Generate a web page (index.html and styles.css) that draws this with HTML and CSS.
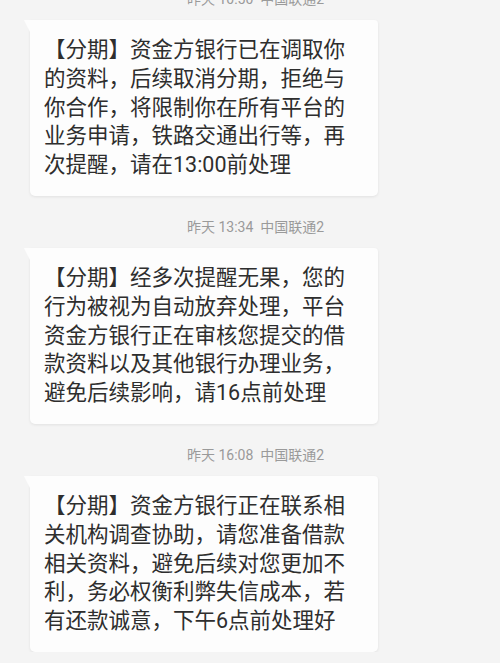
FILE: index.html
```html
<!DOCTYPE html>
<html lang="zh-CN">

<head>
    <meta charset="UTF-8">
    <meta name="viewport" content="width=device-width, initial-scale=1.0">
    <title>短信</title>
    <link rel="stylesheet" href="styles.css">
</head>

<body>
    <div class="thread">
        <div class="msg">
            <div class="msg-time">昨天 10:50&nbsp;&nbsp;中国联通2</div>
            <div class="bubble">【分期】资金方银行已在调取你的资料，后续取消分期，拒绝与你合作，将限制你在所有平台的业务申请，铁路交通出行等，再次提醒，请在13:00前处理</div>
        </div>
        <div class="msg">
            <div class="msg-time">昨天 13:34&nbsp;&nbsp;中国联通2</div>
            <div class="bubble">【分期】经多次提醒无果，您的行为被视为自动放弃处理，平台资金方银行正在审核您提交的借款资料以及其他银行办理业务，避免后续影响，请16点前处理</div>
        </div>
        <div class="msg">
            <div class="msg-time">昨天 16:08&nbsp;&nbsp;中国联通2</div>
            <div class="bubble">【分期】资金方银行正在联系相关机构调查协助，请您准备借款相关资料，避免后续对您更加不利，务必权衡利弊失信成本，若有还款诚意，下午6点前处理好</div>
        </div>
    </div>
</body>

</html>
```

FILE: styles.css
```css
html,
body {
    margin: 0;
    padding: 0;
    background-color: #f4f4f4;
    overflow: hidden;
}

body {
    font-family: Roboto, "Noto Sans CJK SC", sans-serif;
    color: #2e2e2e;
}

.thread {
    display: flex;
    flex-direction: column;
    gap: 21px;
    margin-top: -11px;
}

.msg {
    display: flex;
    flex-direction: column;
    gap: 11px;
}

.msg-time {
    height: 20px;
    line-height: 20px;
    font-size: 14px;
    color: #9a9a9a;
    padding-left: 187px;
    white-space: nowrap;
}

.bubble {
    position: relative;
    margin-left: 30px;
    width: 301px;
    padding: 16px 33px 16px 14px;
    background-color: #fdfdfd;
    border-radius: 0 4px 5px 5px;
    box-shadow: 0 1px 3px rgba(0, 0, 0, 0.08);
    font-size: 21.5px;
    line-height: 28.8px;
}

/* 气泡左上角的小尖角 */
.bubble::before {
    content: "";
    position: absolute;
    left: -6px;
    top: 0;
    width: 0;
    height: 0;
    border-top: 12px solid #fdfdfd;
    border-left: 6px solid transparent;
}
```
